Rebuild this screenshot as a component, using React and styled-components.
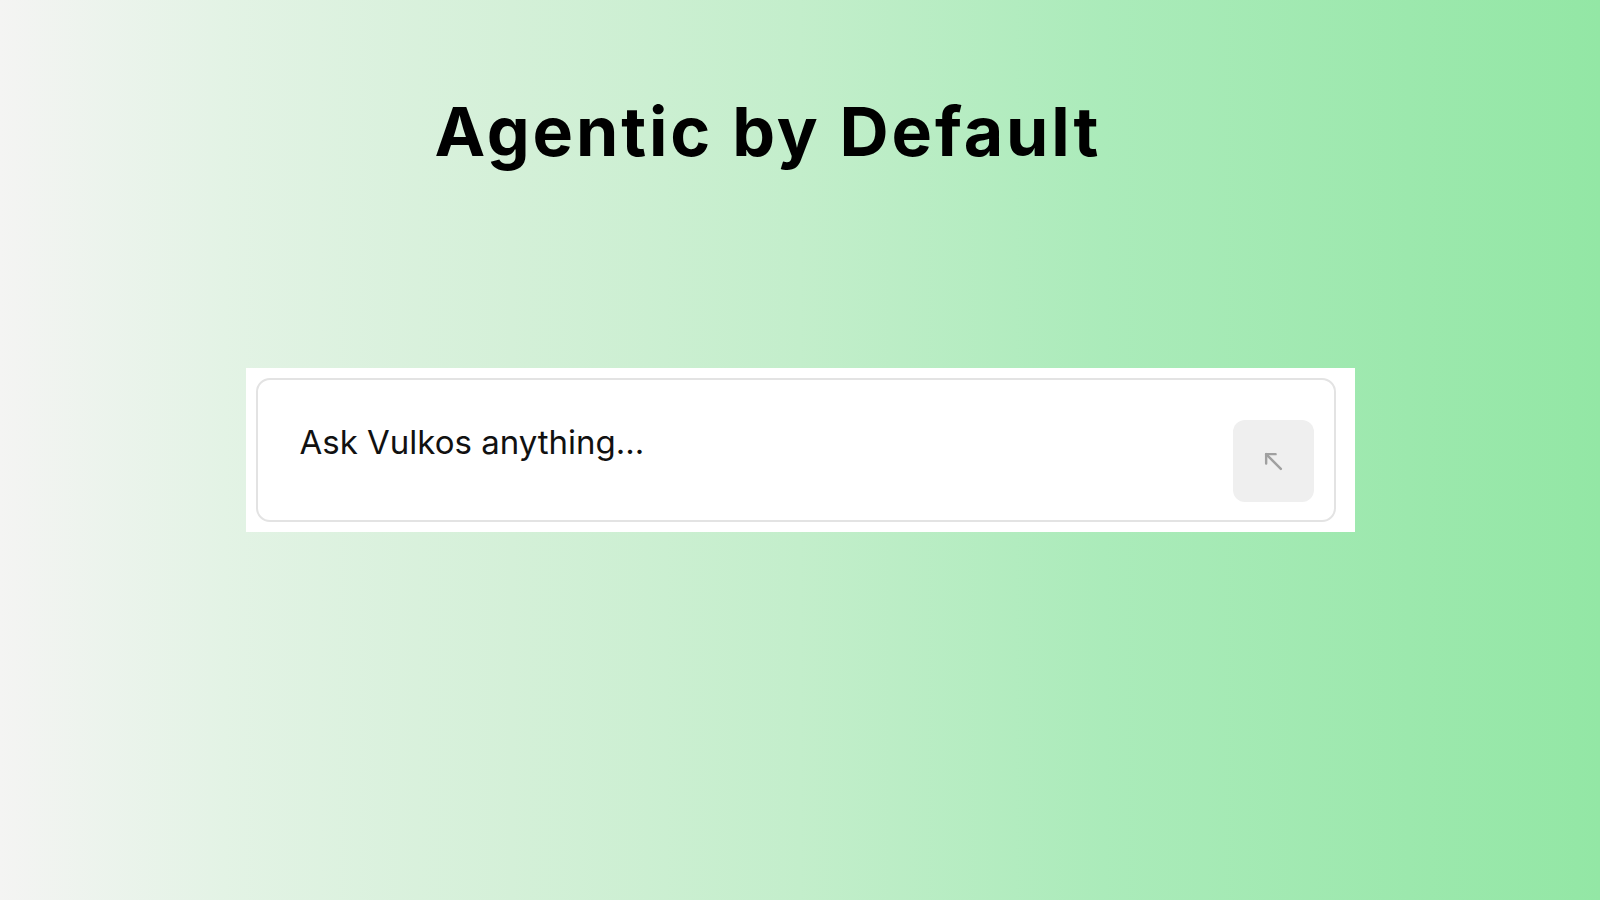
import React from 'react';
import styled, { createGlobalStyle } from 'styled-components';

const GlobalStyle = createGlobalStyle`
  html, body {
    margin: 0;
    padding: 0;
  }
  body {
    font-family: Inter, "Noto Sans", sans-serif;
  }
`;

const Page = styled.div`
  width: 1600px;
  height: 900px;
  background: linear-gradient(
    to right,
    #f4f4f3 0%,
    #e3f3e5 14%,
    #d4f0d8 32%,
    #c3eecb 50%,
    #abebba 69%,
    #9ce8ad 88%,
    #93e7a5 100%
  );
  display: flex;
  flex-direction: column;
  align-items: center;
`;

const Title = styled.h1`
  margin: 91px 64px 0 0;
  font-family: Inter, sans-serif;
  font-size: 68px;
  font-weight: 700;
  line-height: 80px;
  letter-spacing: 2.9px;
  color: #000;
`;

const Frame = styled.div`
  margin-top: 197px;
  width: 1109px;
  background: #fff;
  padding: 10px 19px 10px 10px;
  box-sizing: border-box;
`;

const Prompt = styled.div`
  height: 144px;
  box-sizing: border-box;
  border: 2px solid #e3e3e3;
  border-radius: 14px;
  display: flex;
  align-items: flex-start;
  justify-content: space-between;
  padding: 40px 20px 0 42px;
`;

const Placeholder = styled.span`
  font-family: Inter, sans-serif;
  font-size: 33px;
  font-weight: 400;
  color: #111;
  line-height: 40px;
  margin-top: 2px;
`;

const SendButton = styled.button`
  width: 81px;
  height: 82px;
  border: none;
  border-radius: 12px;
  background: #efefef;
  display: flex;
  align-items: center;
  justify-content: center;
  cursor: pointer;
`;

const ArrowIcon = () => (
  <svg width="21" height="21" viewBox="0 0 20 20" fill="none" stroke="#a0a0a0" strokeWidth="2.3" strokeLinecap="round" strokeLinejoin="round">
    <path d="M17 17 3 3" />
    <path d="M3 12V3h9" />
  </svg>
);

const App = () => {
  return (
    <>
      <GlobalStyle />
      <Page>
        <Title>Agentic by Default</Title>
        <Frame>
          <Prompt>
            <Placeholder>Ask Vulkos anything...</Placeholder>
            <SendButton aria-label="Send">
              <ArrowIcon />
            </SendButton>
          </Prompt>
        </Frame>
      </Page>
    </>
  );
};

export default App;
